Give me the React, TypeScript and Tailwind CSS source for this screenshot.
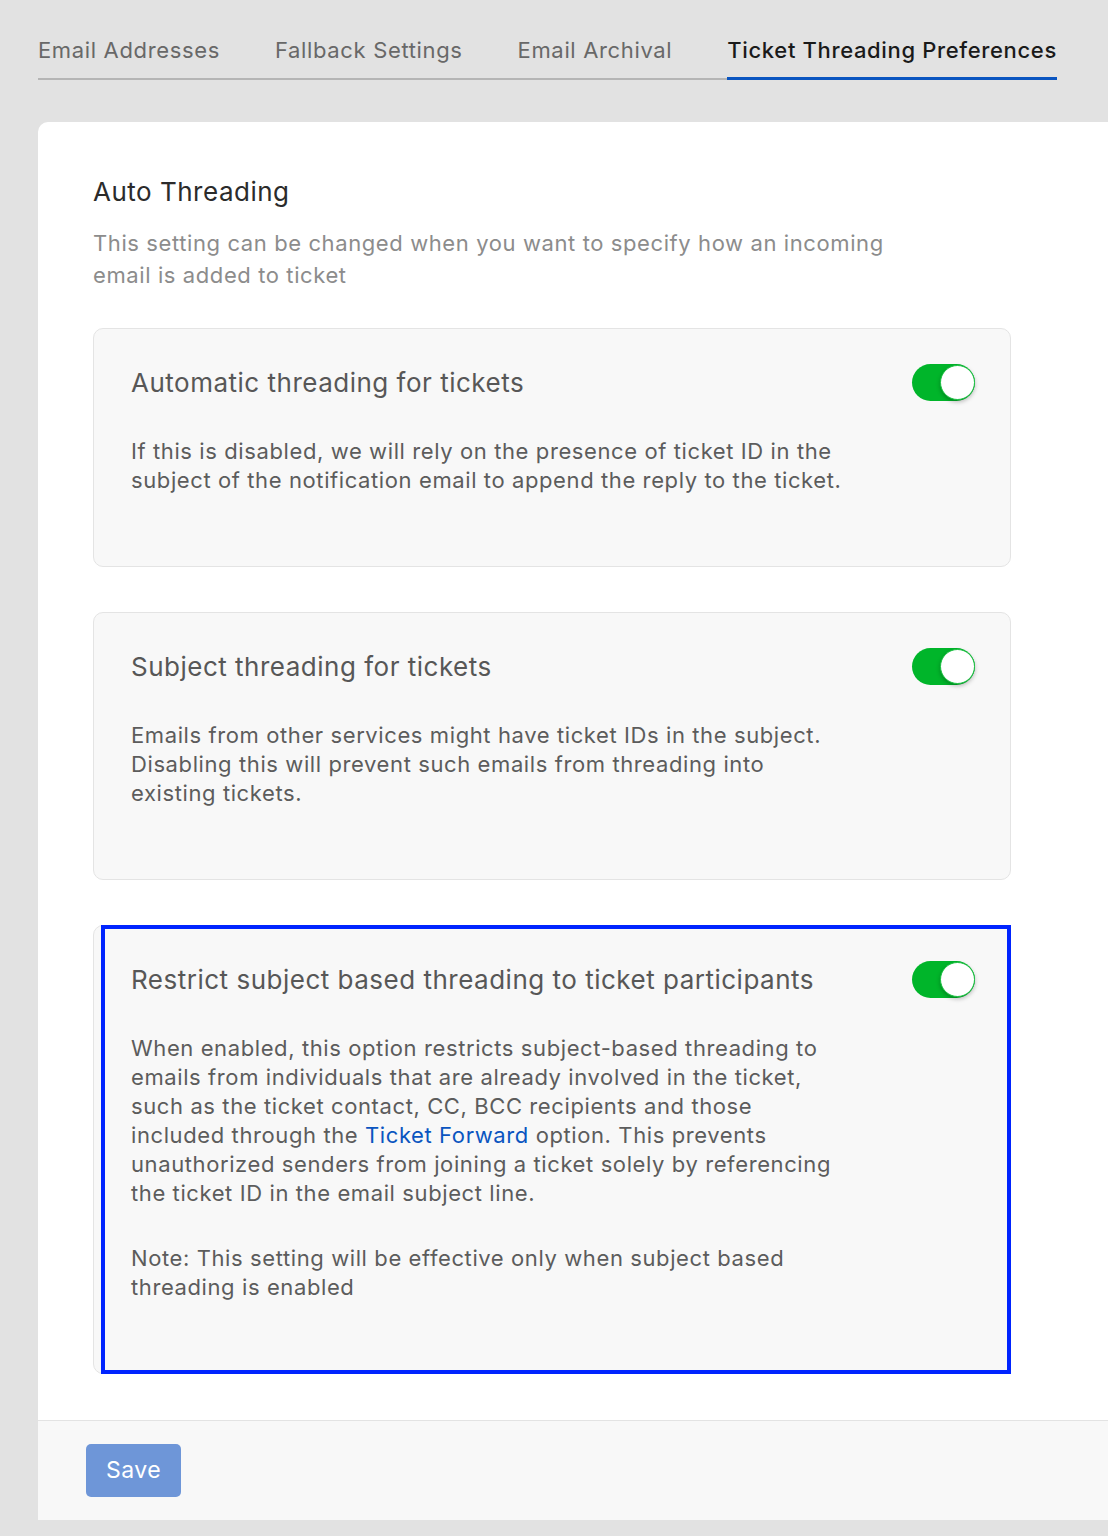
import React from "react";

const tabs = ["Email Addresses", "Fallback Settings", "Email Archival", "Ticket Threading Preferences"];

const Toggle: React.FC = () => (
    <div className="relative h-[37px] w-[63px] shrink-0 rounded-full bg-[#00b52a]">
        <div className="absolute right-0 top-[1px] h-[35px] w-[35px] rounded-full border-[1.5px] border-[#19c040] bg-white shadow-[0_2px_4px_rgba(0,0,0,0.25)]" />
    </div>
);

const SettingCard: React.FC<{ title: string; children: React.ReactNode; focused?: boolean }> = ({
    title,
    children,
    focused,
}) => (
    <div className="relative rounded-[10px] border border-[#e4e4e4] bg-[#f8f8f8] pb-[71px] pl-[37px] pr-[35px] pt-[35px]">
        <div className="flex items-center justify-between">
            <h3 className="text-[26px] leading-[34px] tracking-[0.5px] text-[#575757]">{title}</h3>
            <Toggle />
        </div>
        <div className="mt-[36px] max-w-[720px] text-[22px] leading-[29px] tracking-[0.6px] text-[#5c5c5c]">
            {children}
        </div>
        {focused && (
            <div className="pointer-events-none absolute bottom-[-1px] left-[7px] right-[-1px] top-[-1px] border-[4px] border-[#0024ff]" />
        )}
    </div>
);

export default function App() {
    return (
        <div className="min-h-[1536px] bg-[#e2e2e2] pb-[15px] font-['Inter',sans-serif]">
            <div className="ml-[38px] inline-flex gap-[55px] border-b-2 border-[#b5b5b5] pt-[36px]">
                {tabs.map((t, i) => (
                    <div
                        key={t}
                        className={
                            i === 3
                                ? "-mb-[2px] border-b-[3px] border-[#0a55c0] pb-[13px] text-[22px] font-medium leading-[28px] tracking-[0.65px] text-[#1a1a1a]"
                                : "pb-[14px] text-[22px] leading-[28px] tracking-[0.65px] text-[#686868]"
                        }
                    >
                        {t}
                    </div>
                ))}
            </div>

            <div className="ml-[38px] mt-[42px] overflow-hidden rounded-tl-[10px] bg-white">
                <div className="px-[55px] pb-[46px] pt-[54px]">
                    <div className="w-[918px]">
                        <h2 className="text-[26px] leading-[32px] tracking-[0.5px] text-[#2b2b2b]">Auto Threading</h2>
                        <p className="mt-[19px] max-w-[820px] text-[22px] leading-[32px] tracking-[0.6px] text-[#8c8c8c]">
                            This setting can be changed when you want to specify how an incoming email is added to ticket
                        </p>

                        <div className="mt-[37px] flex flex-col gap-[45px]">
                            <SettingCard title="Automatic threading for tickets">
                                If this is disabled, we will rely on the presence of ticket ID in the subject of the
                                notification email to append the reply to the ticket.
                            </SettingCard>
                            <SettingCard title="Subject threading for tickets">
                                Emails from other services might have ticket IDs in the subject. Disabling this will
                                prevent such emails from threading into existing tickets.
                            </SettingCard>
                            <SettingCard title="Restrict subject based threading to ticket participants" focused>
                                <p>
                                    When enabled, this option restricts subject-based threading to emails from
                                    individuals that are already involved in the ticket, such as the ticket contact, CC,
                                    BCC recipients and those included through the{" "}
                                    <span className="text-[#0a55c0]">Ticket Forward</span> option. This prevents
                                    unauthorized senders from joining a ticket solely by referencing the ticket ID in the
                                    email subject line.
                                </p>
                                <p className="mt-[36px]">
                                    Note: This setting will be effective only when subject based threading is enabled
                                </p>
                            </SettingCard>
                        </div>
                    </div>
                </div>

                <div className="border-t border-[#e3e3e3] bg-[#f8f8f8] px-[48px] py-[23px]">
                    <button className="h-[53px] w-[95px] rounded-[5px] bg-[#6e96d8] text-[23px] tracking-[0.5px] text-white">
                        Save
                    </button>
                </div>
            </div>
        </div>
    );
}
